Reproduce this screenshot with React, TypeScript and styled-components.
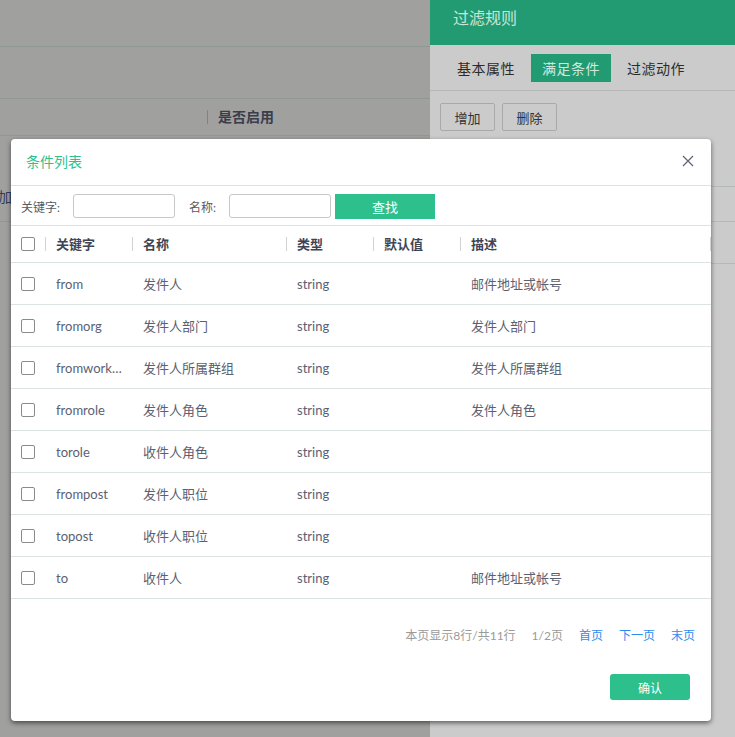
import React from "react";
import styled, { createGlobalStyle } from "styled-components";

const Global = createGlobalStyle`
  html, body { margin: 0; padding: 0; }
  body {
    width: 735px; height: 737px; overflow: hidden;
    font-family: Lato, "Noto Sans CJK SC", sans-serif;
  }
  * { box-sizing: border-box; }
`;

const Page = styled.div`
  position: relative;
  width: 735px;
  height: 737px;
  display: grid;
  grid-template-columns: 430px 305px;
  overflow: hidden;
`;

const LeftPane = styled.div`
  background: #a0a09e;
  display: flex;
  flex-direction: column;
`;

const LeftRow = styled.div<{ h: number; top?: number }>`
  height: ${(p) => p.h}px;
  border-bottom: 1px solid #8f9893;
  display: flex;
  align-items: ${(p) => (p.top ? "flex-start" : "center")};
  padding-top: ${(p) => p.top || 0}px;
  font-size: 14px;
  overflow: hidden;
`;

const LeftHeadCell = styled.div`
  margin-left: 207px;
  padding-left: 10px;
  border-left: 1px solid #7f8480;
  height: 14px;
  line-height: 14px;
  font-weight: bold;
  color: #3a3d4c;
`;

const LeftText = styled.div`
  margin-left: -16px;
  color: #2f3b5c;
  font-size: 14px;
  white-space: nowrap;
`;

const RightPane = styled.div`
  background: #cbcbcb;
  display: flex;
  flex-direction: column;
`;

const DrawerHead = styled.div`
  height: 45px;
  background: #239b72;
  color: #c6e6d7;
  font-size: 16px;
  padding: 5px 0 0 23px;
  display: flex;
  align-items: flex-start;
`;

const Tabs = styled.div`
  height: 46px;
  border-bottom: 1px solid #b3b8b6;
  display: flex;
  align-items: center;
  padding-left: 17px;
`;

const Tab = styled.div<{ active?: boolean }>`
  height: 28px;
  padding: 0 ${(p) => (p.active ? 11 : 10)}px;
  margin-right: 6px;
  display: flex;
  align-items: center;
  font-size: 14px;
  color: ${(p) => (p.active ? "#cfeadd" : "#2b2b2b")};
  background: ${(p) => (p.active ? "#239b72" : "transparent")};
  letter-spacing: 0.5px;
`;

const BtnBar = styled.div`
  display: flex;
  gap: 7px;
  padding: 12px 10px 0;
  height: 96px;
  border-bottom: 1px solid #b4bab7;
`;

const GrayBtn = styled.div`
  width: 55px;
  height: 28px;
  border: 1px solid #a9a9a9;
  border-radius: 2px;
  display: flex;
  align-items: center;
  justify-content: center;
  font-size: 13px;
  color: #333;
`;

const RightLine = styled.div<{ h: number }>`
  height: ${(p) => p.h}px;
  border-bottom: 1px solid #b4bab7;
`;

const Dialog = styled.div`
  position: absolute;
  left: 11px;
  top: 139px;
  width: 700px;
  height: 582px;
  background: #fff;
  border-radius: 4px;
  box-shadow: 0 2px 5px rgba(0, 0, 0, 0.55);
  display: flex;
  flex-direction: column;
`;

const DialogHead = styled.div`
  height: 47px;
  border-bottom: 1px solid #dbe4e2;
  display: flex;
  align-items: center;
  justify-content: space-between;
  padding: 0 16px 2px 15px;
`;

const Title = styled.div`
  color: #2fc08c;
  font-size: 14px;
`;

const Close = styled.div`
  width: 14px;
  height: 14px;
  display: flex;
  align-items: center;
  justify-content: center;
`;

const SearchRow = styled.div`
  height: 40px;
  border-bottom: 1px solid #dbe4e2;
  display: flex;
  align-items: center;
  padding-left: 10px;
  padding-top: 1px;
`;

const Label = styled.span<{ w: number }>`
  width: ${(p) => p.w}px;
  font-size: 12px;
  color: #555b66;
`;

const Input = styled.div<{ mr: number }>`
  width: 102px;
  height: 24px;
  border: 1px solid #c8c8c8;
  border-radius: 3px;
  margin-right: ${(p) => p.mr}px;
`;

const FindBtn = styled.div`
  width: 100px;
  height: 25px;
  background: #2dbf8c;
  color: #fff;
  font-size: 13px;
  display: flex;
  align-items: center;
  justify-content: center;
`;

const cols = "34px 87px 154px 87px 87px 1fr";

const HeadRow = styled.div`
  display: grid;
  grid-template-columns: ${cols};
  height: 37px;
  border-bottom: 1px solid #dbe4e2;
  align-items: center;
`;

const Row = styled.div`
  display: grid;
  grid-template-columns: ${cols};
  height: 42px;
  border-bottom: 1px solid #dbe4e2;
  align-items: center;
`;

const CheckCell = styled.div`
  padding-left: 10px;
  display: flex;
  align-items: center;
`;

const Box = styled.div`
  width: 14px;
  height: 14px;
  border: 1px solid #8a8a8a;
  border-radius: 2px;
  background: #fff;
`;

const HeadCell = styled.div<{ last?: boolean }>`
  border-left: 1px solid #cfd3d6;
  height: 14px;
  line-height: 14px;
  padding-left: 10px;
  font-size: 13px;
  font-weight: bold;
  color: #3f4454;
  ${(p) => (p.last ? "border-right: 1px solid #cfd3d6;" : "")}
`;

const Cell = styled.div`
  padding-left: 11px;
  padding-right: 10px;
  font-size: 13px;
  color: #5b6172;
  white-space: nowrap;
  overflow: hidden;
  text-overflow: ellipsis;
`;

const Pager = styled.div`
  display: flex;
  justify-content: flex-end;
  align-items: center;
  gap: 16px;
  padding: 19px 16px 0 0;
  height: 52px;
  font-size: 12px;
`;

const PagerText = styled.span`
  color: #9a9a9a;
`;

const PagerLink = styled.span`
  color: #2d8cf0;
`;

const Footer = styled.div`
  flex: 1;
  display: flex;
  justify-content: flex-end;
  align-items: flex-end;
  padding: 0 21px 21px 0;
`;

const OkBtn = styled.div`
  width: 80px;
  height: 26px;
  background: #2dbf8c;
  border-radius: 3px;
  color: #fff;
  font-size: 12px;
  display: flex;
  align-items: center;
  justify-content: center;
`;

const rows = [
  ["from", "发件人", "string", "", "邮件地址或帐号"],
  ["fromorg", "发件人部门", "string", "", "发件人部门"],
  ["fromworkgroup", "发件人所属群组", "string", "", "发件人所属群组"],
  ["fromrole", "发件人角色", "string", "", "发件人角色"],
  ["torole", "收件人角色", "string", "", ""],
  ["frompost", "发件人职位", "string", "", ""],
  ["topost", "收件人职位", "string", "", ""],
  ["to", "收件人", "string", "", "邮件地址或帐号"],
];

export default function App() {
  return (
    <>
      <Global />
      <Page>
        <LeftPane>
          <LeftRow h={47} />
          <LeftRow h={52} />
          <LeftRow h={37}>
            <LeftHeadCell>是否启用</LeftHeadCell>
          </LeftRow>
          <LeftRow h={86} top={50}>
            <LeftText>添加时间</LeftText>
          </LeftRow>
        </LeftPane>
        <RightPane>
          <DrawerHead>过滤规则</DrawerHead>
          <Tabs>
            <Tab>基本属性</Tab>
            <Tab active>满足条件</Tab>
            <Tab>过滤动作</Tab>
          </Tabs>
          <BtnBar>
            <GrayBtn>增加</GrayBtn>
            <GrayBtn>删除</GrayBtn>
          </BtnBar>
          <RightLine h={35} />
          <RightLine h={42} />
        </RightPane>

        <Dialog>
          <DialogHead>
            <Title>条件列表</Title>
            <Close>
              <svg width="12" height="12" viewBox="0 0 12 12">
                <path d="M1 1L11 11M11 1L1 11" stroke="#5f6675" strokeWidth="1.3" fill="none" />
              </svg>
            </Close>
          </DialogHead>
          <SearchRow>
            <Label w={52}>关键字:</Label>
            <Input mr={14} />
            <Label w={40}>名称:</Label>
            <Input mr={4} />
            <FindBtn>查找</FindBtn>
          </SearchRow>
          <HeadRow>
            <CheckCell>
              <Box />
            </CheckCell>
            <HeadCell>关键字</HeadCell>
            <HeadCell>名称</HeadCell>
            <HeadCell>类型</HeadCell>
            <HeadCell>默认值</HeadCell>
            <HeadCell last>描述</HeadCell>
          </HeadRow>
          {rows.map((r, i) => (
            <Row key={i}>
              <CheckCell>
                <Box />
              </CheckCell>
              {r.map((c, j) => (
                <Cell key={j}>{c}</Cell>
              ))}
            </Row>
          ))}
          <Pager>
            <PagerText>本页显示8行/共11行</PagerText>
            <PagerText>1/2页</PagerText>
            <PagerLink>首页</PagerLink>
            <PagerLink>下一页</PagerLink>
            <PagerLink>末页</PagerLink>
          </Pager>
          <Footer>
            <OkBtn>确认</OkBtn>
          </Footer>
        </Dialog>
      </Page>
    </>
  );
}
